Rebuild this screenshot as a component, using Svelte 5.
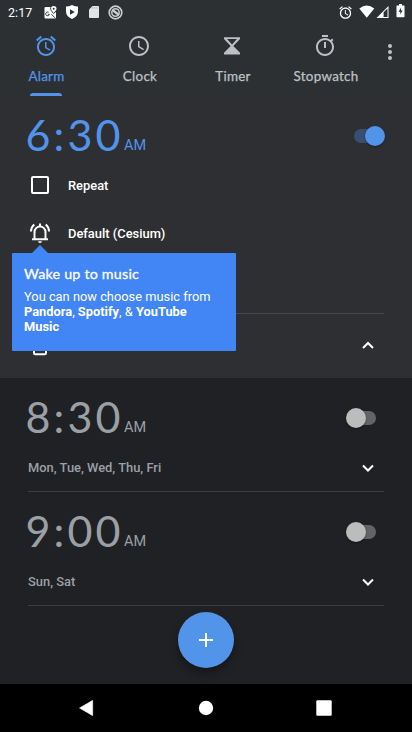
<script>
  let tabs = $state([
    { name: 'Alarm', icon: 'alarm' },
    { name: 'Clock', icon: 'clock' },
    { name: 'Timer', icon: 'timer' },
    { name: 'Stopwatch', icon: 'stopwatch' }
  ]);
  let active = $state('Alarm');
  const alarms = [
    { time: '8:30', days: 'Mon, Tue, Wed, Thu, Fri' },
    { time: '9:00', days: 'Sun, Sat' }
  ];
</script>

{#snippet alarmIcon(size)}
  <svg width={size} height={size} viewBox="0 0 24 24" fill="currentColor"><path d="M22 5.72l-4.6-3.86-1.29 1.53 4.6 3.86L22 5.72zM7.88 3.39L6.6 1.86 2 5.71l1.29 1.53 4.59-3.85zM12.5 8H11v6l4.75 2.85.75-1.23-4-2.37V8zM12 4c-4.97 0-9 4.03-9 9s4.02 9 9 9c4.97 0 9-4.03 9-9s-4.03-9-9-9zm0 16c-3.87 0-7-3.13-7-7s3.13-7 7-7 7 3.13 7 7-3.13 7-7 7z" /></svg>
{/snippet}

{#snippet clockTime(t)}
  <div class="time">
    {#each t.split('') as c}<span class="char" class:colon={c === ':'}>{c}</span>{/each}
    <span class="am">AM</span>
  </div>
{/snippet}

{#snippet chevron(up)}
  <svg width="24" height="24" viewBox="0 0 24 24" fill="none" stroke="#fff" stroke-width="2.1"><path d={up ? 'M7 13.9l5-5 5 5' : 'M7 10.500l5 5 5-5'} /></svg>
{/snippet}

<div class="screen">
  <header>
    <div class="status">
      <span class="now">2:17</span>
      <svg class="s1" width="13" height="13" viewBox="0 0 13 13"><path fill="#fff" d="M1.500 1h5c-.3 2 .8 3.900 2.900 6.300L12 6v5.500q0 1-1 1H1.500q-1 0-1-1V2q0-1 1-1z" /><path fill="#fff" d="M9.700 0a2.800 2.800 0 0 0-2.800 2.800c0 1.700 2.800 4.400 2.800 4.400s2.800-2.700 2.800-4.400A2.800 2.800 0 0 0 9.700 0z" /><path d="M6.400 1.500q-.2 2.700 3.100 6.200l2.600-3" fill="none" stroke="#2d3033" stroke-width=".7" /><circle cx="9.700" cy="2.700" r="1" fill="#2d3033" /><path d="M4.600 6.300a1.900 1.900 0 1 0 .8 2H3.800M7.500 8.300l3.500 3.500" fill="none" stroke="#2d3033" stroke-width=".9" /></svg>
      <svg class="s2" width="14" height="14" viewBox="0 0 14 14"><path fill="#fff" d="M7 0q3 1.600 6 1.600v5Q13 11.500 7 14 1 11.500 1 6.600v-5Q4 1.600 7 0z" /><path d="M5 4.300v5.400L9.700 7z" fill="#2d3033" /></svg>
      <svg class="s3" width="12" height="14" viewBox="0 0 12 14"><path fill="#e2e3e3" d="M4.500 1H10q1 0 1 1v10q0 1-1 1H2q-1 0-1-1V4.500z" /><path d="M4.800 2v1.700M6.800 2v1.700M8.800 2v1.700" stroke="#aaacae" stroke-width=".8" /></svg>
      <svg class="s4" width="15" height="15" viewBox="0 0 15 15" fill="none" stroke="#c9cacc"><circle cx="7.500" cy="7.500" r="6.300" stroke-width="1.700" /><circle cx="7.500" cy="7.500" r="3.700" stroke-width="1.500" /><path d="M4.500 5l6.500 5" stroke-width="2.300" /></svg>
      <span class="sysalarm">{@render alarmIcon(15)}</span>
      <svg class="wifi" width="16" height="14" viewBox="0 0 16 14"><path fill="#fff" d="M.3 3.600Q7.600-2.500 15.300 3.600L7.800 12.800z" /></svg>
      <svg class="cell" width="14" height="14" viewBox="0 0 14 14"><path fill="#fff" fill-rule="evenodd" d="M.5 13L12.500 1v12zM7.600 7.300V12h3.900V3.400z" /></svg>
      <svg class="bat" width="9" height="14" viewBox="0 0 9 14"><path fill="#fff" d="M3 0h3v1.400h2q.5 0 .5.600v10.500q0 .8-.8.800H1.300q-.8 0-.8-.8V2q0-.6.500-.6h2z" /><path d="M5 3.700L2.500 7.700h1.800v2.800l2.300-4H5z" fill="#2d3033" /></svg>
    </div>
    <nav>
      {#each tabs as tab}
        <button class="tab" class:active={active === tab.name} onclick={() => (active = tab.name)}>
          {#if tab.icon === 'alarm'}
            {@render alarmIcon(24)}
          {:else if tab.icon === 'clock'}
            <svg width="24" height="24" viewBox="0 0 24 24" fill="currentColor"><path d="M11.990 2C6.470 2 2 6.480 2 12s4.470 10 9.990 10C17.520 22 22 17.520 22 12S17.520 2 11.990 2zM12 20c-4.420 0-8-3.580-8-8s3.580-8 8-8 8 3.580 8 8-3.580 8-8 8zm.5-13H11v6l5.250 3.150.75-1.230-4.500-2.670z" /></svg>
          {:else if tab.icon === 'timer'}
            <svg width="24" height="24" viewBox="0 0 24 24"><path fill="currentColor" fill-rule="evenodd" d="M4 3.200h16V5L13.300 12 20 18.800v1.800H4v-1.800L10.700 12 4 5zM7 5.100l5 5.300 5-5.300z" /></svg>
          {:else}
            <svg width="24" height="24" viewBox="0 0 24 24" fill="currentColor"><path d="M15 1H9v2h6V1zm-4 13h2V8h-2v6zm8.030-6.610l1.420-1.420c-.43-.51-.9-.99-1.410-1.410l-1.420 1.420C16.070 4.740 14.120 4 12 4c-4.970 0-9 4.030-9 9s4.020 9 9 9 9-4.030 9-9c0-2.120-.74-4.070-1.970-5.610zM12 20c-3.870 0-7-3.130-7-7s3.130-7 7-7 7 3.130 7 7-3.130 7-7 7z" /></svg>
          {/if}
          <span class="label">{tab.name}</span>
          <i></i>
        </button>
      {/each}
      <div class="more"><b></b><b></b><b></b></div>
    </nav>
  </header>

  <section class="open">
    <div class="top">{@render clockTime('6:30')}<div class="switch on"><i></i></div></div>
    <div class="option"><span class="box"></span>Repeat</div>
    <div class="option">
      <svg width="24" height="24" viewBox="0 0 24 24" fill="none" stroke="#fff" stroke-width="2"><path d="M4 18.200h16M6.500 18v-7a5.500 5.500 0 0 1 11 0v7" /><path d="M12 2.600v3M2.900 10.500q.2-4.400 3.400-7M21.100 10.500q-.2-4.400-3.400-7" /><path d="M10 20.300h4q-.3 1.700-2 1.700t-2-1.700z" fill="#fff" stroke="none" /></svg>
      Default (Cesium)
      <div class="tip">
        <h2>Wake up to music</h2>
        <p>You can now choose music from <b>Pandora</b>, <b>Spotify</b>, &amp; <b>YouTube Music</b></p>
      </div>
    </div>
    <div class="spacer"></div>
    <div class="bottom">
      <svg width="24" height="24" viewBox="0 0 24 24" fill="none" stroke="#fff" stroke-width="2"><path d="M5 5h14M6 7v12q0 1.200 1.200 1.200h9.600q1.200 0 1.200-1.200V7" /></svg>
      {@render chevron(true)}
    </div>
  </section>

  <main>
    {#each alarms as a}
      <article>
        <div class="top">{@render clockTime(a.time)}<div class="switch"><i></i></div></div>
        <div class="days"><span>{a.days}</span>{@render chevron(false)}</div>
      </article>
    {/each}
    <button class="fab" aria-label="Add alarm"><svg width="24" height="24" viewBox="0 0 24 24" stroke="#fff" stroke-width="2"><path d="M5 12h14M12 5v14" /></svg></button>
  </main>

  <footer>
    <svg width="18" height="18" viewBox="0 0 18 18"><path d="M.5 9L13.700 1.300v15.400z" fill="#fff" stroke="#fff" stroke-width=".5" stroke-linejoin="round" /></svg>
    <svg width="18" height="18" viewBox="0 0 18 18"><circle cx="9" cy="9" r="7.200" fill="#fff" /></svg>
    <svg width="18" height="18" viewBox="0 0 18 18"><rect x="1.300" y="1.300" width="15.400" height="15.400" rx="1" fill="#fff" /></svg>
  </footer>
</div>

<style>
  :global(body) { margin: 0; background: #202124; }
  .screen { width: 412px; height: 732px; display: flex; flex-direction: column; overflow: hidden; background: #202124; font-family: Roboto, sans-serif; color: #fff; }
  svg { display: block; flex: none; }
  button { border: 0; padding: 0; background: none; font: inherit; }
  header { height: 96px; background: #2d3033; flex: none; }
  .status { height: 24px; display: flex; align-items: center; }
  .now { width: 24px; margin: 2px 12px 0 8px; font-size: 12.4px; line-height: 16px; letter-spacing: .1px; white-space: nowrap; }
  .s2 { margin-left: 8px; }
  .s3 { margin-left: 9px; }
  .s4 { margin-left: 8px; }
  .sysalarm { margin: 1px 0 0 auto; }
  .wifi { margin: 0 0 0 6px; }
  .cell { margin-left: 1px; }
  .bat { margin: -2px 7px 0 6px; }
  nav { display: flex; height: 72px; }
  .tab { width: 93px; display: flex; flex-direction: column; align-items: center; color: #bdc1c6; padding-top: 10px; }
  .tab svg { margin-right: 1px; }
  .label { font: 400 13.4px/20px Lato, sans-serif; -webkit-text-stroke: .25px currentColor; letter-spacing: .28px; margin-top: 8px; }
  .tab:not(.active) .label { margin-left: 1px; }
  .tab i { margin-top: auto; height: 3px; width: 32px; margin-right: 1px; }
  .active { color: #5294ea; }
  .active i { background: #5294ea; border-radius: 3px 3px 0 0; }
  .more { display: flex; flex-direction: column; gap: 2px; padding: 20px 0 0 16px; }
  .more b { width: 4px; height: 4px; border-radius: 2px; background: #bdc1c6; }
  section { height: 282px; flex: none; background: #2e2f33; }
  .top { height: 65px; display: flex; align-items: flex-start; justify-content: space-between; padding: 0 28px 0 24px; }
  .time { display: flex; align-items: baseline; height: 65px; font: 400 43px/77px Lato, sans-serif; color: #9aa0a6; }
  .open .time { color: #5294ea; }
  .char { width: 28px; text-align: center; }
  .char.colon { width: 14px; }
  .am { font: 400 14.500px/20px Roboto, sans-serif; margin-left: 2px; transform: translateY(-1px); }
  .switch { width: 30px; height: 20px; margin: 29.500px 8.500px 0 0; display: flex; align-items: center; position: relative; }
  .switch::before { content: ''; width: 26px; height: 14px; margin-left: 5px; border-radius: 7px; background: #636466; }
  .switch i { position: absolute; left: 0; top: 0; width: 20px; height: 20px; border-radius: 50%; background: #bcbcbc; box-shadow: 0 1px 2px #0006; }
  .switch.on { margin-right: -.500px; }
  .switch.on::before { margin-left: -1px; background: #394f70; }
  .switch.on i { left: 10px; background: #5294ea; }
  .option { height: 48px; display: flex; align-items: center; gap: 16px; padding-left: 28px; font-weight: 500; font-size: 12.900px; position: relative; }
  .box { width: 14px; height: 14px; border: 2px solid #fff; border-radius: 2px; margin: 0 3px; }
  .tip { position: absolute; z-index: 2; left: 12px; top: 44px; width: 200px; height: 86px; padding: 12px 12px 0; background: #4285f4; border-radius: 1px; font-weight: 400; }
  .tip::before { content: ''; position: absolute; left: 20px; top: -8px; border: 8px solid transparent; border-top: 0; border-bottom-color: #4285f4; }
  .tip h2 { margin: 0 0 6px; font: 400 14.300px/18px Lato, sans-serif; -webkit-text-stroke: .3px #fff; letter-spacing: .2px; }
  .tip p { margin: 0; font-size: 12.850px; line-height: 15px; }
  .tip b { font-weight: 700; }
  .spacer { height: 56px; margin: 0 28px; border-bottom: 1px solid #46474a; }
  .bottom { height: 64px; display: flex; align-items: center; justify-content: space-between; padding: 0 32px 0 28px; }
  main { flex: 1; display: flex; flex-direction: column; align-items: center; }
  article { width: 412px; height: 114px; box-sizing: border-box; }
  article::after { content: ''; display: block; height: 1px; margin: 0 28px; background: #3c3d40; }
  .days { height: 48px; display: flex; align-items: center; justify-content: space-between; padding: 0 32px 0 28px; color: #9aa0a6; font-size: 12.900px; font-weight: 500; }
  .fab { margin-top: 6px; width: 56px; height: 56px; border-radius: 50%; background: #5294ea; display: flex; align-items: center; justify-content: center; box-shadow: 0 5px 8px #0005; }
  footer { height: 48px; flex: none; background: #000; display: flex; justify-content: space-between; padding: 0 79px; align-items: center; }
</style>
